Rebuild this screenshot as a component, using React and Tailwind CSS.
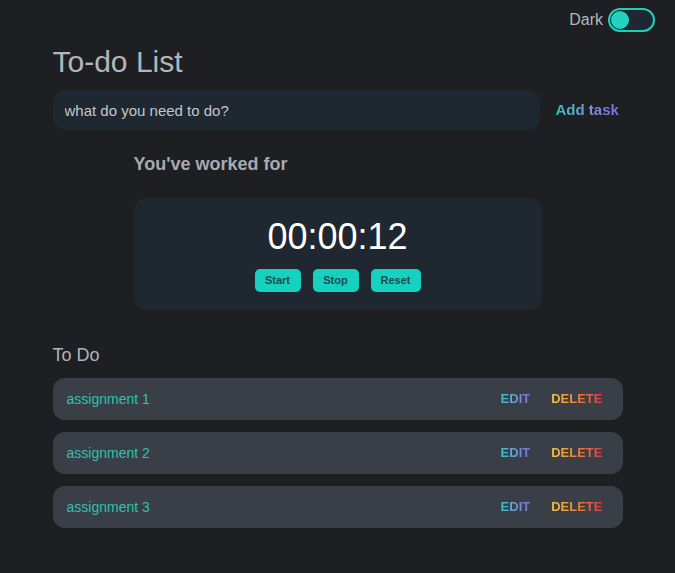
import { useState } from 'react';

const tasks = ['assignment 1', 'assignment 2', 'assignment 3'];

function Toggle({ on, onChange }) {
  return (
    <button
      type="button"
      onClick={() => onChange(!on)}
      className="relative h-[24px] w-[47px] rounded-full border-2 border-[#1fcfbd] bg-[#1f2731]"
    >
      <span
        className={`absolute top-[1px] h-[18px] w-[18px] rounded-full bg-[#1fd3c0] ${on ? 'left-[1px]' : 'left-[24px]'}`}
      />
    </button>
  );
}

function TaskRow({ name }) {
  return (
    <div className="flex h-[42px] items-center justify-between rounded-xl bg-[#3a3f47] pl-[14px] pr-[20px]">
      <span className="text-[14px] text-[#2cc1b2]">{name}</span>
      <div className="flex items-center gap-[21px] text-[13px] font-bold">
        <button type="button" className="bg-gradient-to-r from-[#2cc3c9] to-[#7f6be0] bg-clip-text text-transparent">
          EDIT
        </button>
        <button type="button" className="bg-gradient-to-r from-[#f2c53a] via-[#e9803a] to-[#d93548] bg-clip-text text-transparent">
          DELETE
        </button>
      </div>
    </div>
  );
}

const timerButtons = [
  { label: 'Start', width: 'w-[46px]' },
  { label: 'Stop', width: 'w-[46px]' },
  { label: 'Reset', width: 'w-[50px]' },
];

export default function App() {
  const [dark, setDark] = useState(true);
  const [task, setTask] = useState('');

  return (
    <div className="min-h-[573px] bg-[#1d1f23] font-['Liberation_Sans',Arial,sans-serif]">
      <div className="flex items-center justify-end gap-[5px] pr-[20px] pt-[8px]">
        <span className="text-[16px] text-[#b4b7bb]">Dark</span>
        <Toggle on={dark} onChange={setDark} />
      </div>

      <div className="mx-auto w-[570px]">
        <h1 className="mt-[12px] text-[30px] font-light leading-[36px] text-[#b3b6ba]">To-do List</h1>

        <div className="mt-[10px] flex items-center">
          <input
            value={task}
            onChange={(e) => setTask(e.target.value)}
            placeholder="what do you need to do?"
            className="h-[40px] w-[487px] rounded-xl bg-[#1f2731] px-[12px] text-[15px] text-[#c3c6ca] placeholder:text-[#c3c6ca] outline-none"
          />
          <button
            type="button"
            className="ml-[16px] bg-gradient-to-r from-[#22c5c5] to-[#8a63e6] bg-clip-text text-[15px] font-bold text-transparent"
          >
            Add task
          </button>
        </div>

        <div className="mx-auto mt-[22px] w-[408px]">
          <h2 className="text-[18px] font-bold leading-[24px] text-[#a7aaae]">You've worked for</h2>
          <div className="mt-[22px] flex h-[112px] flex-col items-center rounded-xl bg-[#1f2731] pt-[19px]">
            <div className="text-[36px] leading-[40px] text-white">00:00:12</div>
            <div className="mt-[12px] flex gap-[12px]">
              {timerButtons.map((b) => (
                <button
                  key={b.label}
                  type="button"
                  className={`h-[23px] ${b.width} rounded-[5px] bg-[#16d1bf] text-[11px] font-bold text-[#1e4b4c]`}
                >
                  {b.label}
                </button>
              ))}
            </div>
          </div>
        </div>

        <h3 className="mt-[33px] text-[18px] leading-[24px] text-[#b0b3b7]">To Do</h3>
        <div className="mt-[11px] flex flex-col gap-[12px]">
          {tasks.map((t) => (
            <TaskRow key={t} name={t} />
          ))}
        </div>
      </div>
    </div>
  );
}
